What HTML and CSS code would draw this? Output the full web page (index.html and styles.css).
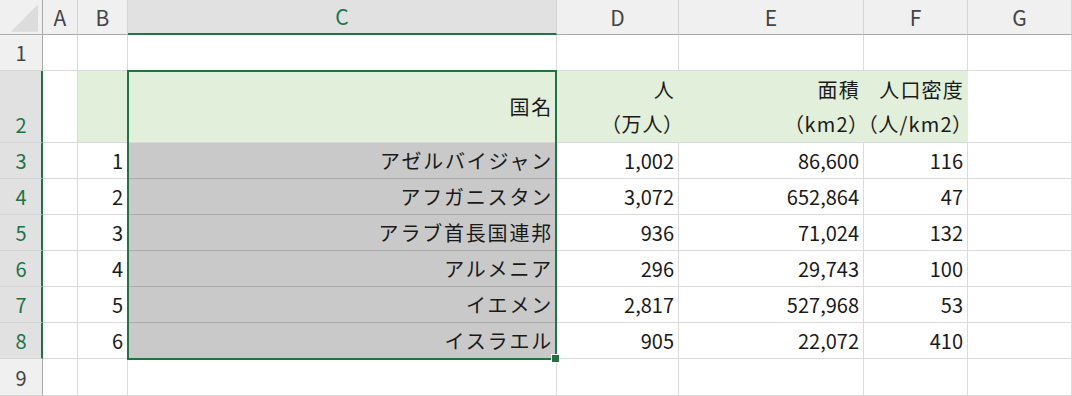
FILE: index.html
```html
<!DOCTYPE html>
<html lang="ja">
<head>
<meta charset="utf-8">
<title>Sheet</title>
<link rel="stylesheet" href="styles.css">
</head>
<body>
<div class="sheet">
  <div class="corner"><svg width="43" height="35" viewBox="0 0 43 35"><polygon points="39,4 39,32 11,32" fill="#dcdcdc"/></svg></div>
  <div class="ch">A</div>
  <div class="ch">B</div>
  <div class="ch ch-sel">C</div>
  <div class="ch">D</div>
  <div class="ch">E</div>
  <div class="ch">F</div>
  <div class="ch">G</div>

  <div class="rh">1</div>
  <div class="c"></div><div class="c"></div><div class="c"></div><div class="c"></div><div class="c"></div><div class="c"></div><div class="c"></div>

  <div class="rh rh-sel">2</div>
  <div class="c"></div>
  <div class="c green"></div>
  <div class="c green jp mid">国名</div>
  <div class="c green hd"><span>人</span><span class="pt">（万人）</span></div>
  <div class="c green hd"><span>面積</span><span class="pt">（km2）</span></div>
  <div class="c green hd"><span>人口密度</span><span class="pt">（人/km2）</span></div>
  <div class="c"></div>

  <div class="rh rh-sel">3</div>
  <div class="c"></div><div class="c num">1</div>
  <div class="c gray jp">アゼルバイジャン</div>
  <div class="c num">1,002</div><div class="c num">86,600</div><div class="c num">116</div><div class="c"></div>

  <div class="rh rh-sel">4</div>
  <div class="c"></div><div class="c num">2</div>
  <div class="c gray jp">アフガニスタン</div>
  <div class="c num">3,072</div><div class="c num">652,864</div><div class="c num">47</div><div class="c"></div>

  <div class="rh rh-sel">5</div>
  <div class="c"></div><div class="c num">3</div>
  <div class="c gray jp">アラブ首長国連邦</div>
  <div class="c num">936</div><div class="c num">71,024</div><div class="c num">132</div><div class="c"></div>

  <div class="rh rh-sel">6</div>
  <div class="c"></div><div class="c num">4</div>
  <div class="c gray jp">アルメニア</div>
  <div class="c num">296</div><div class="c num">29,743</div><div class="c num">100</div><div class="c"></div>

  <div class="rh rh-sel">7</div>
  <div class="c"></div><div class="c num">5</div>
  <div class="c gray jp">イエメン</div>
  <div class="c num">2,817</div><div class="c num">527,968</div><div class="c num">53</div><div class="c"></div>

  <div class="rh rh-sel">8</div>
  <div class="c"></div><div class="c num">6</div>
  <div class="c gray jp">イスラエル</div>
  <div class="c num">905</div><div class="c num">22,072</div><div class="c num">410</div><div class="c"></div>

  <div class="rh">9</div>
  <div class="c"></div><div class="c"></div><div class="c"></div><div class="c"></div><div class="c"></div><div class="c"></div><div class="c"></div>

  <div class="sel"><div class="handle"></div></div>
</div>
</body>
</html>
```
FILE: styles.css
```css
html, body {
  margin: 0;
  padding: 0;
  background: #ffffff;
}
body {
  font-family: "Noto Sans CJK JP", "Noto Sans", sans-serif;
  color: #1a1a1a;
  width: 1072px;
  height: 396px;
  overflow: hidden;
}
.sheet {
  position: relative;
  display: grid;
  grid-template-columns: 43px 35px 50px 429px 122px 185px 104px 104px;
  grid-template-rows: 35px 36px 72px repeat(6, 36px) 37px;
}
.sheet > div {
  box-sizing: border-box;
}
.corner {
  background: #f0f0f0;
  border-right: 1px solid #ababab;
  border-bottom: 1px solid #ababab;
  display: flex;
}
.corner svg {
  display: block;
}
.ch {
  background: #f0f0f0;
  border-right: 1px solid #d4d4d4;
  border-bottom: 1px solid #ababab;
  display: flex;
  align-items: center;
  justify-content: center;
  font-size: 21px;
  color: #444444;
  line-height: 1;
}
.ch-sel {
  background: #e1e1e1;
  border-bottom: 2px solid #217346;
  color: #217346;
}
.rh {
  background: #f0f0f0;
  border-right: 1px solid #ababab;
  border-bottom: 1px solid #d4d4d4;
  display: flex;
  align-items: flex-end;
  justify-content: center;
  font-size: 20px;
  line-height: 35px;
  color: #444444;
}
.rh-sel {
  background: #e1e1e1;
  border-right: 2px solid #217346;
  color: #217346;
  padding-left: 1px;
}
.c {
  border-right: 1px solid #dadada;
  border-bottom: 1px solid #dadada;
  display: flex;
  align-items: center;
  justify-content: flex-end;
  padding-right: 4px;
  font-size: 20px;
  line-height: 34px;
  white-space: nowrap;
}
.num {
  padding-right: 4px;
}
.jp {
  letter-spacing: 1.8px;
  padding-right: 3px;
}
.green {
  background: #e2efda;
  border-right-color: #e2efda;
}
.gray {
  background: #c9c9c9;
  border-bottom-color: #acacac;
}
.hd {
  flex-direction: column;
  align-items: flex-end;
  justify-content: center;
  letter-spacing: 1.2px;
  padding-right: 3px;
}
.pt {
  font-feature-settings: "palt" 1;
}
.sel {
  position: absolute;
  left: 127px;
  top: 70px;
  width: 430px;
  height: 290px;
  border: 2px solid #217346;
  box-sizing: border-box;
  pointer-events: none;
}
.handle {
  position: absolute;
  right: -5px;
  bottom: -5px;
  width: 7px;
  height: 7px;
  background: #217346;
  border: 1px solid #ffffff;
}
```
